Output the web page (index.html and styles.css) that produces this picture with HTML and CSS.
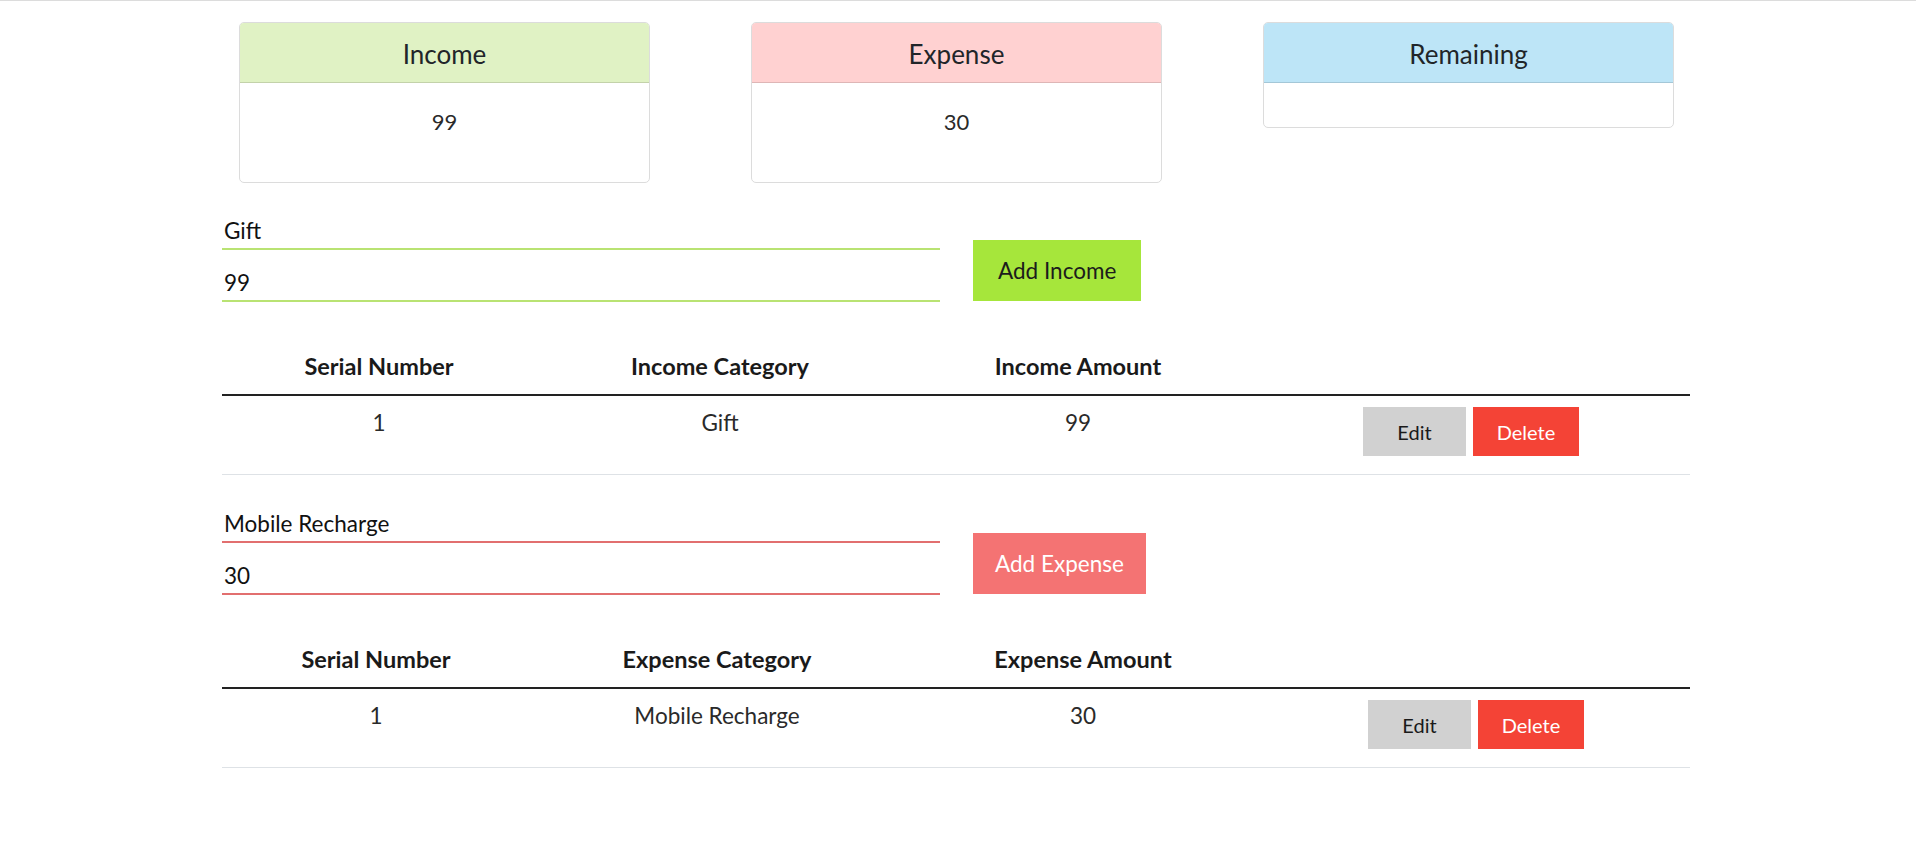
FILE: index.html
```html
<!DOCTYPE html>
<html lang="en">
<head>
<meta charset="utf-8">
<title>Budget Tracker</title>
<link rel="stylesheet" href="styles.css">
</head>
<body>
<div class="topline"></div>
<main class="page">
  <section class="cards">
    <div class="card">
      <div class="card-header income-head">Income</div>
      <div class="card-body"><div class="amount">99</div></div>
    </div>
    <div class="card">
      <div class="card-header expense-head">Expense</div>
      <div class="card-body"><div class="amount">30</div></div>
    </div>
    <div class="card">
      <div class="card-header remaining-head">Remaining</div>
      <div class="card-body"></div>
    </div>
  </section>

  <form class="entry-form">
    <div class="fields">
      <input class="field field-income" type="text" value="Gift">
      <input class="field field-income" type="text" value="99">
    </div>
    <button type="button" class="add-btn add-income">Add Income</button>
  </form>

  <table class="list">
    <colgroup>
      <col class="inc-c1"><col class="inc-c2"><col class="inc-c3"><col class="inc-c4">
    </colgroup>
    <thead>
      <tr><th>Serial Number</th><th>Income Category</th><th>Income Amount</th><th></th></tr>
    </thead>
    <tbody>
      <tr>
        <td>1</td><td>Gift</td><td>99</td>
        <td><div class="actions"><button type="button" class="btn-edit">Edit</button><button type="button" class="btn-delete">Delete</button></div></td>
      </tr>
    </tbody>
  </table>

  <form class="entry-form expense-form">
    <div class="fields">
      <input class="field field-expense" type="text" value="Mobile Recharge">
      <input class="field field-expense" type="text" value="30">
    </div>
    <button type="button" class="add-btn add-expense">Add Expense</button>
  </form>

  <table class="list">
    <colgroup>
      <col class="exp-c1"><col class="exp-c2"><col class="exp-c3"><col class="exp-c4">
    </colgroup>
    <thead>
      <tr><th>Serial Number</th><th>Expense Category</th><th>Expense Amount</th><th></th></tr>
    </thead>
    <tbody>
      <tr>
        <td>1</td><td>Mobile Recharge</td><td>30</td>
        <td><div class="actions"><button type="button" class="btn-edit">Edit</button><button type="button" class="btn-delete">Delete</button></div></td>
      </tr>
    </tbody>
  </table>
</main>
</body>
</html>
```
FILE: styles.css
```css
* { box-sizing: border-box; }
html, body { margin: 0; padding: 0; background: #fff; }
body {
  font-family: Lato, "Open Sans", "Noto Sans", sans-serif;
  color: #222;
}
.topline { height: 1px; background: #dcdcdc; }
.page {
  width: 1468px;
  margin: 21px 0 0 222px;
}
.cards {
  display: flex;
  align-items: flex-start;
  gap: 101px;
  padding-left: 17px;
}
.card {
  width: 411px;
  border: 1px solid #dcdcdc;
  border-radius: 5px;
  overflow: hidden;
}
.card-header {
  height: 60px;
  border-bottom: 1px solid rgba(0,0,0,0.13);
  display: flex;
  align-items: center;
  justify-content: center;
  padding-top: 2px;
  font-size: 26px;
  color: #212529;
}
.income-head { background: #e0f2c4; }
.expense-head { background: #ffd1d1; }
.remaining-head { background: #bde5f7; }
.card-body {
  padding: 22px 16px;
  min-height: 44px;
}
.amount {
  margin: 2px 0 23px;
  line-height: 30px;
  font-size: 22px;
  text-align: center;
  color: #2a2a2a;
}
.entry-form {
  display: flex;
  align-items: flex-end;
  margin-top: 33px;
}
.expense-form { margin-top: 34px; }
.fields {
  width: 718px;
  display: flex;
  flex-direction: column;
  gap: 18px;
}
.field {
  height: 34px;
  border: none;
  border-bottom: 2px solid;
  padding: 0 2px 4px;
  font-family: inherit;
  font-size: 22.5px;
  color: #111;
  background: transparent;
  outline: none;
}
.field-income { border-bottom-color: #b9e373; }
.field-expense { border-bottom-color: #e26f6f; }
.add-btn {
  margin: 0 0 1px 33px;
  height: 61px;
  padding: 0 25px;
  border: none;
  font-family: inherit;
  font-size: 22.5px;
}
.add-income { background: #a6e63b; color: #1c1c1c; }
.add-expense { background: #f47373; color: #fff; padding: 0 22px; }
.list {
  width: 1468px;
  border-collapse: collapse;
  table-layout: fixed;
  margin-top: 37px;
}
.inc-c1 { width: 314px; } .inc-c2 { width: 368px; } .inc-c3 { width: 348px; } .inc-c4 { width: 438px; }
.exp-c1 { width: 308px; } .exp-c2 { width: 374px; } .exp-c3 { width: 358px; } .exp-c4 { width: 428px; }
.list th {
  padding: 12px 8px 13px;
  line-height: 30px;
  font-size: 23.5px;
  font-weight: 700;
  color: #1a1a1a;
  text-align: center;
  border-bottom: 2px solid #222;
}
.list td {
  padding: 12px 8px 17px;
  line-height: 30px;
  font-size: 22.5px;
  color: #2a2a2a;
  text-align: center;
  vertical-align: top;
  border-bottom: 1px solid #dee2e6;
}
.list td:last-child { padding-top: 11px; padding-bottom: 18px; }
.actions {
  display: flex;
  justify-content: center;
  gap: 7px;
}
.actions button {
  height: 49px;
  border: none;
  font-family: inherit;
  font-size: 20px;
  padding: 0;
}
.btn-edit { width: 103px; background: #d1d1d1; color: #1a1a1a; }
.btn-delete { width: 106px; background: #f44336; color: #fff; }
```
